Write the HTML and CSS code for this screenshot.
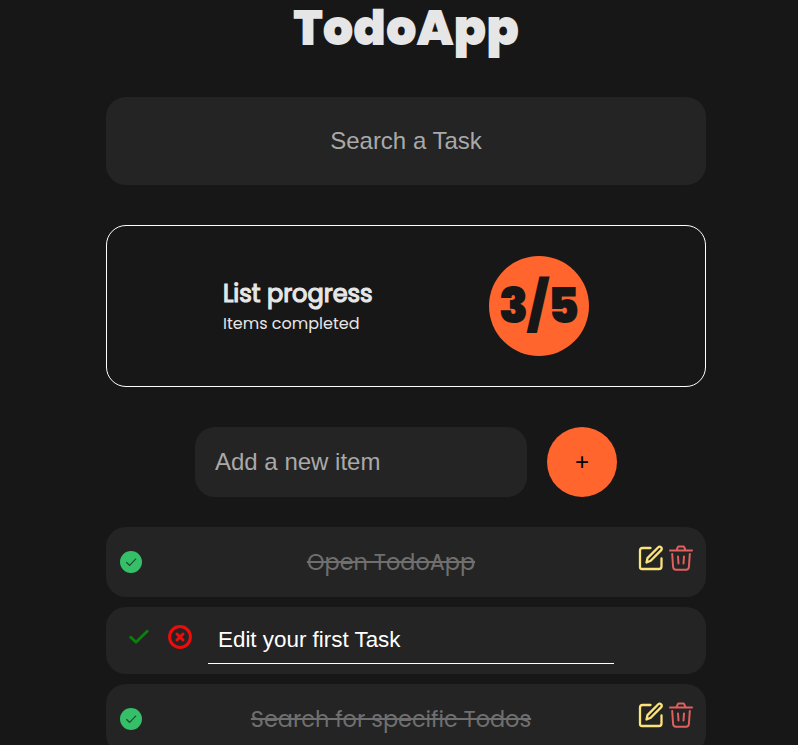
FILE: index.html
```
<!DOCTYPE html>
<html lang="en">
<head>
<meta charset="utf-8">
<title>TodoApp</title>
<link rel="stylesheet" href="styles.css">
</head>
<body>
<svg class="sprite" width="0" height="0">
  <symbol id="done" viewBox="0 0 22 22"><circle cx="11" cy="11" r="11" fill="#35bf68"/><path d="M6.3 11.300l3.300 3 6.500-6.600" fill="none" stroke="#1b4f2e" stroke-width="1.200"/></symbol>
  <symbol id="edit" viewBox="0 0 26 26"><g fill="none" stroke="#fbe37c" stroke-width="2.300" stroke-linecap="round" stroke-linejoin="round"><path d="M12.500 3H4.500Q2 3 2 5.500V22Q2 24 4 24H21Q23.500 24 23.500 21.500V13.500"/><path d="M8.500 17.500l1-4.400L20.300 2.200a1.900 1.900 0 0 1 2.700 0l.2.2a1.900 1.900 0 0 1 0 2.700L12.700 15.700z"/></g></symbol>
  <symbol id="trash" viewBox="0 0 24 26"><g fill="none" stroke="#e0605e" stroke-width="2" stroke-linecap="round" stroke-linejoin="round"><path d="M1 5.500H23M7.500 5.300L8.700 2.300Q9 1.500 10 1.500H14Q15 1.500 15.300 2.300L16.500 5.300M3.200 9L4.100 22Q4.300 24.700 7 24.700H17Q19.700 24.700 19.900 22L20.800 9M9 11.500L9.500 18.500M15 11.500L14.500 18.500"/></g></symbol>
</svg>
<main class="app">
  <h1 class="title">TodoApp</h1>
  <input class="search" placeholder="Search a Task">
  <section class="progress">
    <div class="progress-text">
      <h2>List progress</h2>
      <p>Items completed</p>
    </div>
    <div class="counter">3/5</div>
  </section>
  <form class="add">
    <input class="add-input" placeholder="Add a new item">
    <button class="add-button" type="button">+</button>
  </form>
  <ul class="list">
    <li class="item">
      <svg class="done"><use href="#done"/></svg>
      <span class="label">Open TodoApp</span>
      <span class="actions"><svg class="edit"><use href="#edit"/></svg><svg class="trash"><use href="#trash"/></svg></span>
    </li>
    <li class="item editing">
      <svg class="save" viewBox="0 0 20 16"><path d="M1.800 8.300L7 13.200 18.200 2.200" fill="none" stroke="#0b800b" stroke-width="2.800" stroke-linecap="round" stroke-linejoin="round"/></svg>
      <svg class="cancel" viewBox="0 0 24 24"><g fill="none" stroke="#f00b0b"><circle cx="12" cy="12" r="10.400" stroke-width="3"/><path d="M9 9l6 6M15 9l-6 6" stroke-width="3" stroke-linecap="round"/></g></svg>
      <input class="edit-input" value="Edit your first Task">
    </li>
    <li class="item">
      <svg class="done"><use href="#done"/></svg>
      <span class="label">Search for specific Todos</span>
      <span class="actions"><svg class="edit"><use href="#edit"/></svg><svg class="trash"><use href="#trash"/></svg></span>
    </li>
  </ul>
</main>
</body>
</html>
```
FILE: styles.css
```
* { box-sizing: border-box; margin: 0; padding: 0; }
html { height: 100%; overflow: hidden; }
body { height: 100%; background: #171717; color: #e6e6e6; font-family: Poppins, Inter, sans-serif; padding-left: 14px; }
.sprite { position: absolute; }
svg { display: block; flex: none; }
input, button { border: 0; outline: 0; font-family: "Liberation Sans", Arial, sans-serif; font-size: 24px; }
input::placeholder { color: #a9a9a9; opacity: 1; }
.app { width: 600px; margin: 0 auto; display: flex; flex-direction: column; align-items: center; }
.title { height: 97px; line-height: 58px; font-size: 48px; font-weight: 900; white-space: nowrap; }
.search { width: 600px; height: 88px; border-radius: 20px; background: #242424; color: #fff; text-align: center; }
.progress { width: 600px; height: 162px; margin-top: 40px; border: 1px solid #fff; border-radius: 20px; display: flex; align-items: center; justify-content: space-evenly; }
.progress-text { width: 150px; white-space: nowrap; }
.progress h2 { font-size: 24px; line-height: 36px; font-weight: 400; -webkit-text-stroke: 1.2px #e6e6e6; }
.progress p { font-size: 16px; line-height: 24px; }
.counter { width: 100px; height: 100px; padding-top: 1px; border-radius: 50%; background: #ff652d; color: #171717; display: flex; align-items: center; justify-content: center; font-size: 48px; font-weight: 900; line-height: 1; }
.add { margin-top: 40px; display: flex; gap: 20px; }
.add-input { width: 332px; height: 70px; padding: 0 20px; border-radius: 20px; background: #242424; color: #fff; }
.add-button { width: 70px; height: 70px; border-radius: 50%; background: #ff652d; color: #000; }
.list { width: 600px; margin-top: 30px; list-style: none; display: flex; flex-direction: column; gap: 10px; }
.item { height: 70px; padding: 0 13px 0 14px; border-radius: 20px; background: #242424; display: flex; align-items: center; }
.done { width: 22px; height: 22px; }
.label { flex: 1; padding-left: 2px; text-align: center; font-size: 22.4px; color: #6f6f6f; text-decoration: line-through 2px; white-space: nowrap; }
.actions { display: flex; gap: 5px; width: 55px; padding-bottom: 8px; }
.edit { width: 26px; height: 26px; }
.trash { width: 24px; height: 26px; }
.editing { height: 67px; padding: 0 0 0 23px; align-items: flex-start; }
.save { width: 20px; height: 16px; margin-top: 22px; }
.cancel { width: 24px; height: 24px; margin: 18px 0 0 19px; }
.edit-input { width: 406px; height: 49px; margin: 8px 0 0 16px; padding: 2px 10px 0; border-bottom: 1px solid #fff; background: transparent; color: #fff; font-size: 22.4px; }
```
